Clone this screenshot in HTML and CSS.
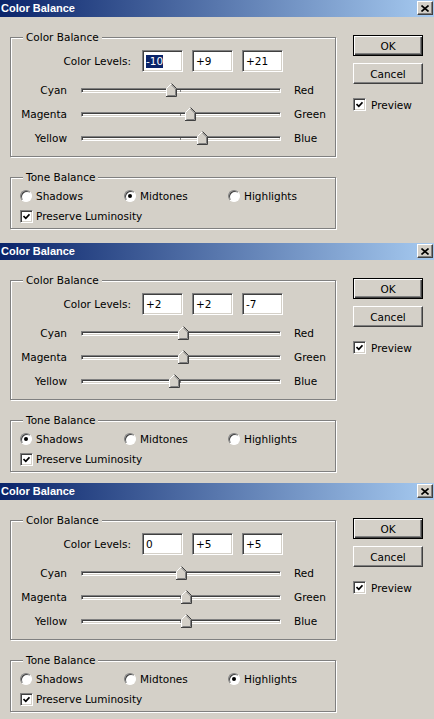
FILE: index.html
```html
<!DOCTYPE html>
<html lang="en">

<head>
    <meta charset="UTF-8">
    <meta name="viewport" content="width=device-width, initial-scale=1.0">
    <title>Color Balance</title>
    <link rel="stylesheet" href="styles.css">
</head>

<body>
    <!-- 第一个对话框 Midtones -->
    <div class="dialog">
        <div class="titlebar">
            <span class="title">Color Balance</span>
            <span class="close"><svg width="8" height="7" viewBox="0 0 8 7"><path d="M0.5 0.5 L7.5 6.5 M7.5 0.5 L0.5 6.5" stroke="#000" stroke-width="1.6"/></svg></span>
        </div>
        <div class="body">
            <div class="main">
                <div class="group balance">
                    <span class="legend">Color Balance</span>
                    <div class="levels-row">
                        <span class="levels-label">Color Levels:</span>
                        <span class="field"><span class="sel">-10</span></span>
                        <span class="field">+9</span>
                        <span class="field">+21</span>
                    </div>
                    <div class="sliders">
                        <div class="slider-row">
                            <span class="side-label">Cyan</span>
                            <div class="track"><span class="tick"></span><svg class="thumb" style="left:84px" width="11" height="14" viewBox="0 0 11 14"><use href="#thumb"/></svg></div>
                            <span>Red</span>
                        </div>
                        <div class="slider-row">
                            <span class="side-label">Magenta</span>
                            <div class="track"><span class="tick"></span><svg class="thumb" style="left:103px" width="11" height="14" viewBox="0 0 11 14"><use href="#thumb"/></svg></div>
                            <span>Green</span>
                        </div>
                        <div class="slider-row">
                            <span class="side-label">Yellow</span>
                            <div class="track"><span class="tick"></span><svg class="thumb" style="left:115px" width="11" height="14" viewBox="0 0 11 14"><use href="#thumb"/></svg></div>
                            <span>Blue</span>
                        </div>
                    </div>
                </div>
                <div class="group tone">
                    <span class="legend">Tone Balance</span>
                    <div class="radio-row">
                        <span class="opt"><span class="radio"></span>Shadows</span>
                        <span class="opt"><span class="radio on"></span>Midtones</span>
                        <span class="opt"><span class="radio"></span>Highlights</span>
                    </div>
                    <div class="check-row">
                        <span class="check"><svg width="7" height="7" viewBox="0 0 7 7"><use href="#tick"/></svg></span>Preserve Luminosity
                    </div>
                </div>
            </div>
            <div class="side">
                <div class="btn default">OK</div>
                <div class="btn">Cancel</div>
                <div class="check-row preview">
                    <span class="check"><svg width="7" height="7" viewBox="0 0 7 7"><use href="#tick"/></svg></span>Preview
                </div>
            </div>
        </div>
    </div>

    <!-- 第二个对话框 Shadows -->
    <div class="dialog short">
        <div class="titlebar">
            <span class="title">Color Balance</span>
            <span class="close"><svg width="8" height="7" viewBox="0 0 8 7"><path d="M0.5 0.5 L7.5 6.5 M7.5 0.5 L0.5 6.5" stroke="#000" stroke-width="1.6"/></svg></span>
        </div>
        <div class="body">
            <div class="main">
                <div class="group balance">
                    <span class="legend">Color Balance</span>
                    <div class="levels-row">
                        <span class="levels-label">Color Levels:</span>
                        <span class="field">+2</span>
                        <span class="field">+2</span>
                        <span class="field">-7</span>
                    </div>
                    <div class="sliders">
                        <div class="slider-row">
                            <span class="side-label">Cyan</span>
                            <div class="track"><span class="tick"></span><svg class="thumb" style="left:96px" width="11" height="14" viewBox="0 0 11 14"><use href="#thumb"/></svg></div>
                            <span>Red</span>
                        </div>
                        <div class="slider-row">
                            <span class="side-label">Magenta</span>
                            <div class="track"><span class="tick"></span><svg class="thumb" style="left:96px" width="11" height="14" viewBox="0 0 11 14"><use href="#thumb"/></svg></div>
                            <span>Green</span>
                        </div>
                        <div class="slider-row">
                            <span class="side-label">Yellow</span>
                            <div class="track"><span class="tick"></span><svg class="thumb" style="left:87px" width="11" height="14" viewBox="0 0 11 14"><use href="#thumb"/></svg></div>
                            <span>Blue</span>
                        </div>
                    </div>
                </div>
                <div class="group tone">
                    <span class="legend">Tone Balance</span>
                    <div class="radio-row">
                        <span class="opt"><span class="radio on"></span>Shadows</span>
                        <span class="opt"><span class="radio"></span>Midtones</span>
                        <span class="opt"><span class="radio"></span>Highlights</span>
                    </div>
                    <div class="check-row">
                        <span class="check"><svg width="7" height="7" viewBox="0 0 7 7"><use href="#tick"/></svg></span>Preserve Luminosity
                    </div>
                </div>
            </div>
            <div class="side">
                <div class="btn default">OK</div>
                <div class="btn">Cancel</div>
                <div class="check-row preview">
                    <span class="check"><svg width="7" height="7" viewBox="0 0 7 7"><use href="#tick"/></svg></span>Preview
                </div>
            </div>
        </div>
    </div>

    <!-- 第三个对话框 Highlights -->
    <div class="dialog last">
        <div class="titlebar">
            <span class="title">Color Balance</span>
            <span class="close"><svg width="8" height="7" viewBox="0 0 8 7"><path d="M0.5 0.5 L7.5 6.5 M7.5 0.5 L0.5 6.5" stroke="#000" stroke-width="1.6"/></svg></span>
        </div>
        <div class="body">
            <div class="main">
                <div class="group balance">
                    <span class="legend">Color Balance</span>
                    <div class="levels-row">
                        <span class="levels-label">Color Levels:</span>
                        <span class="field">0</span>
                        <span class="field">+5</span>
                        <span class="field">+5</span>
                    </div>
                    <div class="sliders">
                        <div class="slider-row">
                            <span class="side-label">Cyan</span>
                            <div class="track"><span class="tick"></span><svg class="thumb" style="left:94px" width="11" height="14" viewBox="0 0 11 14"><use href="#thumb"/></svg></div>
                            <span>Red</span>
                        </div>
                        <div class="slider-row">
                            <span class="side-label">Magenta</span>
                            <div class="track"><span class="tick"></span><svg class="thumb" style="left:99px" width="11" height="14" viewBox="0 0 11 14"><use href="#thumb"/></svg></div>
                            <span>Green</span>
                        </div>
                        <div class="slider-row">
                            <span class="side-label">Yellow</span>
                            <div class="track"><span class="tick"></span><svg class="thumb" style="left:99px" width="11" height="14" viewBox="0 0 11 14"><use href="#thumb"/></svg></div>
                            <span>Blue</span>
                        </div>
                    </div>
                </div>
                <div class="group tone">
                    <span class="legend">Tone Balance</span>
                    <div class="radio-row">
                        <span class="opt"><span class="radio"></span>Shadows</span>
                        <span class="opt"><span class="radio"></span>Midtones</span>
                        <span class="opt"><span class="radio on"></span>Highlights</span>
                    </div>
                    <div class="check-row">
                        <span class="check"><svg width="7" height="7" viewBox="0 0 7 7"><use href="#tick"/></svg></span>Preserve Luminosity
                    </div>
                </div>
            </div>
            <div class="side">
                <div class="btn default">OK</div>
                <div class="btn">Cancel</div>
                <div class="check-row preview">
                    <span class="check"><svg width="7" height="7" viewBox="0 0 7 7"><use href="#tick"/></svg></span>Preview
                </div>
            </div>
        </div>
    </div>

    <!-- 共用的图形: 滑块和勾 -->
    <svg class="defs" width="0" height="0">
        <defs>
            <g id="thumb">
                <polygon points="0.5,13.5 0.5,5.5 5.5,0.5 10.5,5.5 10.5,13.5" fill="#d4d0c8"/>
                <path d="M0.5 13 L0.5 5.5 L5.5 0.5" fill="none" stroke="#fff"/>
                <path d="M5.5 0.5 L10.5 5.5 L10.5 13.5 L0 13.5" fill="none" stroke="#404040"/>
                <path d="M5.5 2 L9.5 6 L9.5 12.5 L1.5 12.5" fill="none" stroke="#808080"/>
            </g>
            <path id="tick" d="M0.5 3 L2.8 5.3 L6.5 1.2" fill="none" stroke="#000" stroke-width="1.7"/>
        </defs>
    </svg>
</body>

</html>
```

FILE: styles.css
```css
* {
    margin: 0;
    padding: 0;
    box-sizing: border-box;
}

body {
    width: 434px;
    height: 719px;
    overflow: hidden;
    background-color: #d4d0c8;
    font: 10.5px "DejaVu Sans", sans-serif;
    color: #000;
}

/* 每个对话框 */
.dialog {
    height: 243px;
    overflow: hidden;
}

.dialog.short {
    height: 240px;
}

.dialog.last {
    height: 236px;
}

/* 标题栏 渐变 */
.titlebar {
    height: 17px;
    display: flex;
    align-items: center;
    justify-content: space-between;
    padding: 0 1px 1px 1px;
    background: linear-gradient(to right, #0a246a, #a6caf0);
}

.title {
    color: #fff;
    font: bold 11px "Liberation Sans", Arial, sans-serif;
}

.close {
    width: 16px;
    height: 14px;
    display: flex;
    align-items: center;
    justify-content: center;
    background-color: #d4d0c8;
    border: 1px solid;
    border-color: #fff #404040 #404040 #fff;
    box-shadow: inset -1px -1px #808080;
}

.body {
    display: flex;
    gap: 17px;
    padding: 18px 0 0 10px;
}

.main {
    width: 326px;
    margin-top: 2px;
}

/* 分组框 蚀刻线 */
.group {
    position: relative;
    border: 1px solid #808080;
    box-shadow: inset 1px 1px #fff, 1px 1px #fff;
}

.legend {
    position: absolute;
    top: -7px;
    left: 12px;
    padding: 0 3px;
    line-height: 13px;
    background-color: #d4d0c8;
}

.balance {
    padding: 12px 0 6px 0;
}

.levels-row {
    display: flex;
    align-items: center;
    height: 22px;
}

.levels-label {
    width: 120px;
    margin-right: 11px;
    text-align: right;
}

.field {
    width: 41px;
    height: 22px;
    margin-right: 9px;
    padding-left: 3px;
    display: flex;
    align-items: center;
    background-color: #fff;
    border: 1px solid;
    border-color: #808080 #fff #fff #808080;
    box-shadow: inset 1px 1px #404040, inset -1px -1px #d4d0c8;
}

.sel {
    background-color: #0a246a;
    color: #fff;
    line-height: 13px;
}

.sliders {
    margin-top: 6px;
}

.slider-row {
    display: flex;
    align-items: center;
    height: 24px;
}

.side-label {
    width: 56px;
    text-align: right;
}

/* 滑轨 */
.track {
    position: relative;
    width: 200px;
    height: 5px;
    margin: 0 13px 0 14px;
    background-color: #fff;
    border: 1px solid;
    border-color: #808080 #fff #fff #808080;
    box-shadow: inset 1px 1px #404040, inset -1px -1px #d4d0c8;
}

.tick {
    position: absolute;
    left: 98px;
    top: 1px;
    width: 1px;
    height: 2px;
    background-color: #808080;
}

.thumb {
    position: absolute;
    top: -6px;
    display: block;
}

.tone {
    margin-top: 20px;
    padding: 10px 0 4px 9px;
}

.radio-row {
    display: grid;
    grid-template-columns: 104px 104px auto;
    height: 16px;
    align-items: center;
}

.opt {
    display: flex;
    align-items: center;
    gap: 4px;
}

.radio {
    width: 12px;
    height: 12px;
    border-radius: 50%;
    background-color: #fff;
    border: 1px solid;
    border-color: #808080 #fff #fff #808080;
    box-shadow: inset 1px 1px #404040;
    display: flex;
    align-items: center;
    justify-content: center;
}

.radio.on::after {
    content: "";
    width: 4px;
    height: 4px;
    border-radius: 50%;
    background-color: #000;
}

.check-row {
    display: flex;
    align-items: center;
    gap: 3px;
    height: 16px;
    margin-top: 4px;
}

.check {
    width: 13px;
    height: 13px;
    display: flex;
    align-items: center;
    justify-content: center;
    background-color: #fff;
    border: 1px solid;
    border-color: #808080 #fff #fff #808080;
    box-shadow: inset 1px 1px #404040, inset -1px -1px #d4d0c8;
}

/* 右侧按钮 */
.side {
    width: 70px;
}

.btn {
    height: 21px;
    display: flex;
    align-items: center;
    justify-content: center;
    border: 1px solid;
    border-color: #fff #404040 #404040 #fff;
    box-shadow: inset -1px -1px #808080;
}

.btn + .btn {
    margin-top: 7px;
}

.btn.default {
    border-color: #000;
    box-shadow: inset 1px 1px #fff, inset -1px -1px #404040, inset -2px -2px #808080;
}

.preview {
    height: 13px;
    margin-top: 14px;
    gap: 5px;
}

.defs {
    position: absolute;
}
```
